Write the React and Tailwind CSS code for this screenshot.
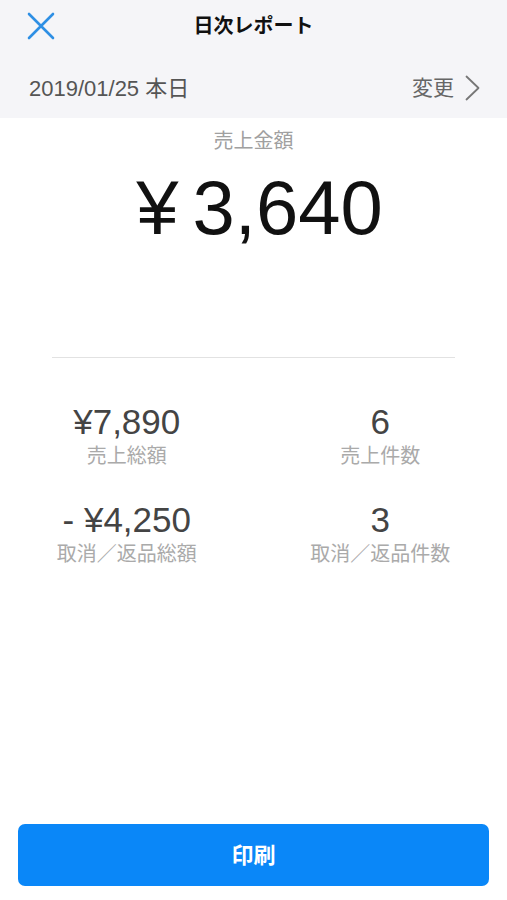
import React from "react";

const stats = [
  { value: "¥7,890", label: "売上総額" },
  { value: "6", label: "売上件数" },
  { value: "- ¥4,250", label: "取消／返品総額" },
  { value: "3", label: "取消／返品件数" },
];

const App = () => {
  return (
    <div
      className="flex min-h-screen flex-col bg-white"
      style={{ fontFamily: '"Liberation Sans", "Noto Sans CJK JP", sans-serif' }}
    >
      {/* Header */}
      <div className="bg-[#f5f5f8]">
        <div className="relative flex h-[52px] items-center justify-center">
          <button className="absolute left-[27px] top-[12px] text-[#2e8fe4]">
            <svg width="28" height="28" viewBox="0 0 28 28" fill="none" stroke="currentColor" strokeWidth={2.6} strokeLinecap="round">
              <path d="M2 2l24 24M26 2L2 26" />
            </svg>
          </button>
          <h1 className="text-[20px] font-bold text-[#111]">日次レポート</h1>
        </div>
        <div className="flex h-[66px] items-center justify-between pl-[29px] pr-[27px] pt-[6px]">
          <span className="text-[22px] text-[#555]">2019/01/25 本日</span>
          <div className="flex items-center gap-[11px] text-[#666]">
            <span className="text-[21px]">変更</span>
            <svg width="15" height="26" viewBox="0 0 15 26" fill="none" stroke="#777" strokeWidth={1.8} strokeLinecap="round" strokeLinejoin="round">
              <path d="M1.5 1.5L13.5 13L1.5 24.5" />
            </svg>
          </div>
        </div>
      </div>

      {/* Total */}
      <div className="flex flex-col items-center pt-[11px]">
        <div className="text-[20px] leading-[24px] text-[#a0a0a0]">売上金額</div>
        <div className="ml-[12px] mt-[17px] flex items-center text-[76px] leading-none text-[#111]">
          <span className="mr-[14px]">¥</span>
          <span>3,640</span>
        </div>
      </div>

      <div className="mx-[52px] mt-[111px] h-px bg-[#e2e2e2]" />

      {/* Stats */}
      <div className="mt-[46px] grid grid-cols-2 gap-y-[34px]">
        {stats.map((s, i) => (
          <div key={i} className="flex flex-col items-center">
            <div className="text-[35px] leading-none text-[#444]">{s.value}</div>
            <div className="mt-[5px] text-[20px] leading-[24px] text-[#aaa]">{s.label}</div>
          </div>
        ))}
      </div>

      {/* Print */}
      <div className="mt-auto px-[18px] pb-[14px]">
        <button className="flex h-[62px] w-full items-center justify-center rounded-[7px] bg-[#0a87f8] text-[22px] font-bold text-white">
          印刷
        </button>
      </div>
    </div>
  );
};

export default App;
